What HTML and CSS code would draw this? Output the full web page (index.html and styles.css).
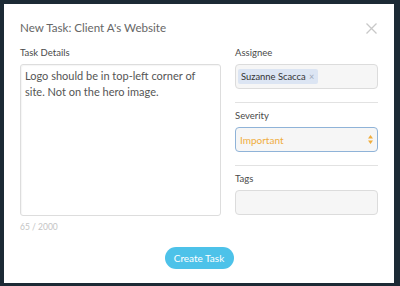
FILE: index.html
```html
<!DOCTYPE html>
<html>
<head>
<meta charset="utf-8">
<link rel="stylesheet" href="styles.css">
</head>
<body>
<div class="modal">
  <div class="header">
    <h1 class="title">New Task: Client A's Website</h1>
    <span class="close"><svg width="11" height="11" viewBox="0 0 11 11"><path d="M0.5 0.5 L10.5 10.5 M10.5 0.5 L0.5 10.5" stroke="#c8c8c8" stroke-width="1.3" fill="none"/></svg></span>
  </div>
  <div class="body">
    <div class="col-left">
      <div class="label">Task Details</div>
      <div class="textarea">Logo should be in top-left corner of site. Not on the hero image.</div>
      <div class="counter">65 / 2000</div>
    </div>
    <div class="col-right">
      <div class="label">Assignee</div>
      <div class="box">
        <span class="tag">Suzanne Scacca <span class="tag-x">×</span></span>
      </div>
      <div class="sep"></div>
      <div class="label">Severity</div>
      <div class="box select">
        <span class="sel-text">Important</span>
        <svg class="arrows" width="5" height="9" viewBox="0 0 5 9"><path d="M2.5 0 L5 3.5 L0 3.5 Z M2.5 9 L5 5.5 L0 5.5 Z" fill="#f0ad3c"/></svg>
      </div>
      <div class="sep"></div>
      <div class="label">Tags</div>
      <div class="box"></div>
    </div>
  </div>
  <div class="footer">
    <button class="btn">Create Task</button>
  </div>
</div>
</body>
</html>
```
FILE: styles.css
```css
html, body {
  margin: 0;
  padding: 0;
}
body {
  background: #1c2a35;
  width: 400px;
  height: 286px;
  overflow: hidden;
  font-family: Lato, "Noto Sans", sans-serif;
  color: #555;
}
.modal {
  margin: 4px 0 0 4px;
  width: 390px;
  height: 279px;
  background: #fff;
  box-sizing: border-box;
  padding: 0 16px;
  display: flex;
  flex-direction: column;
}
.header {
  display: flex;
  justify-content: space-between;
  align-items: center;
  height: 43px;
  padding-top: 4px;
  box-sizing: border-box;
}
.title {
  margin: 0;
  font-size: 11.6px;
  font-weight: 400;
  color: #666;
}
.close {
  display: flex;
  margin-right: 1px;
  margin-top: 2px;
}
.body {
  display: grid;
  grid-template-columns: 201px 143px;
  column-gap: 14px;
}
.label {
  font-size: 9.5px;
  color: #4a4a4a;
  line-height: 12px;
  height: 12px;
  margin-bottom: 5px;
}
.textarea {
  height: 152px;
  box-sizing: border-box;
  border: 1px solid #ddd;
  border-radius: 3px;
  box-shadow: inset 1px 1px 1px rgba(0,0,0,0.04);
  padding: 3px 4px;
  font-size: 11px;
  line-height: 15.5px;
  color: #555;
}
.counter {
  margin-top: 6px;
  font-size: 8.5px;
  color: #c4c4c4;
}
.box {
  height: 25px;
  box-sizing: border-box;
  border: 1px solid #dcdcdc;
  border-radius: 4px;
  background: #f6f6f6;
  display: flex;
  align-items: center;
  padding: 0 2px;
}
.tag {
  background: #dce5f3;
  border-radius: 2px;
  height: 15px;
  line-height: 15px;
  padding: 0 4px 0 3px;
  font-size: 9.4px;
  color: #333;
  white-space: nowrap;
}
.tag-x {
  color: #a0a8b8;
  font-size: 9px;
  margin-left: 1px;
}
.sep {
  height: 1px;
  background: #e2e2e2;
  margin: 13px 0 7px;
}
.select {
  border-color: #8fb3d8;
  padding: 0 4px 0 4px;
  justify-content: space-between;
}
.sel-text {
  color: #f0ad3c;
  font-size: 10px;
}
.footer {
  display: flex;
  justify-content: center;
  margin-top: auto;
  padding-bottom: 14px;
}
.btn {
  border: none;
  background: #4dc2e9;
  color: #fff;
  font-family: Lato, "Noto Sans", sans-serif;
  font-size: 10px;
  height: 22px;
  width: 69px;
  border-radius: 11px;
  padding: 0;
}
```
